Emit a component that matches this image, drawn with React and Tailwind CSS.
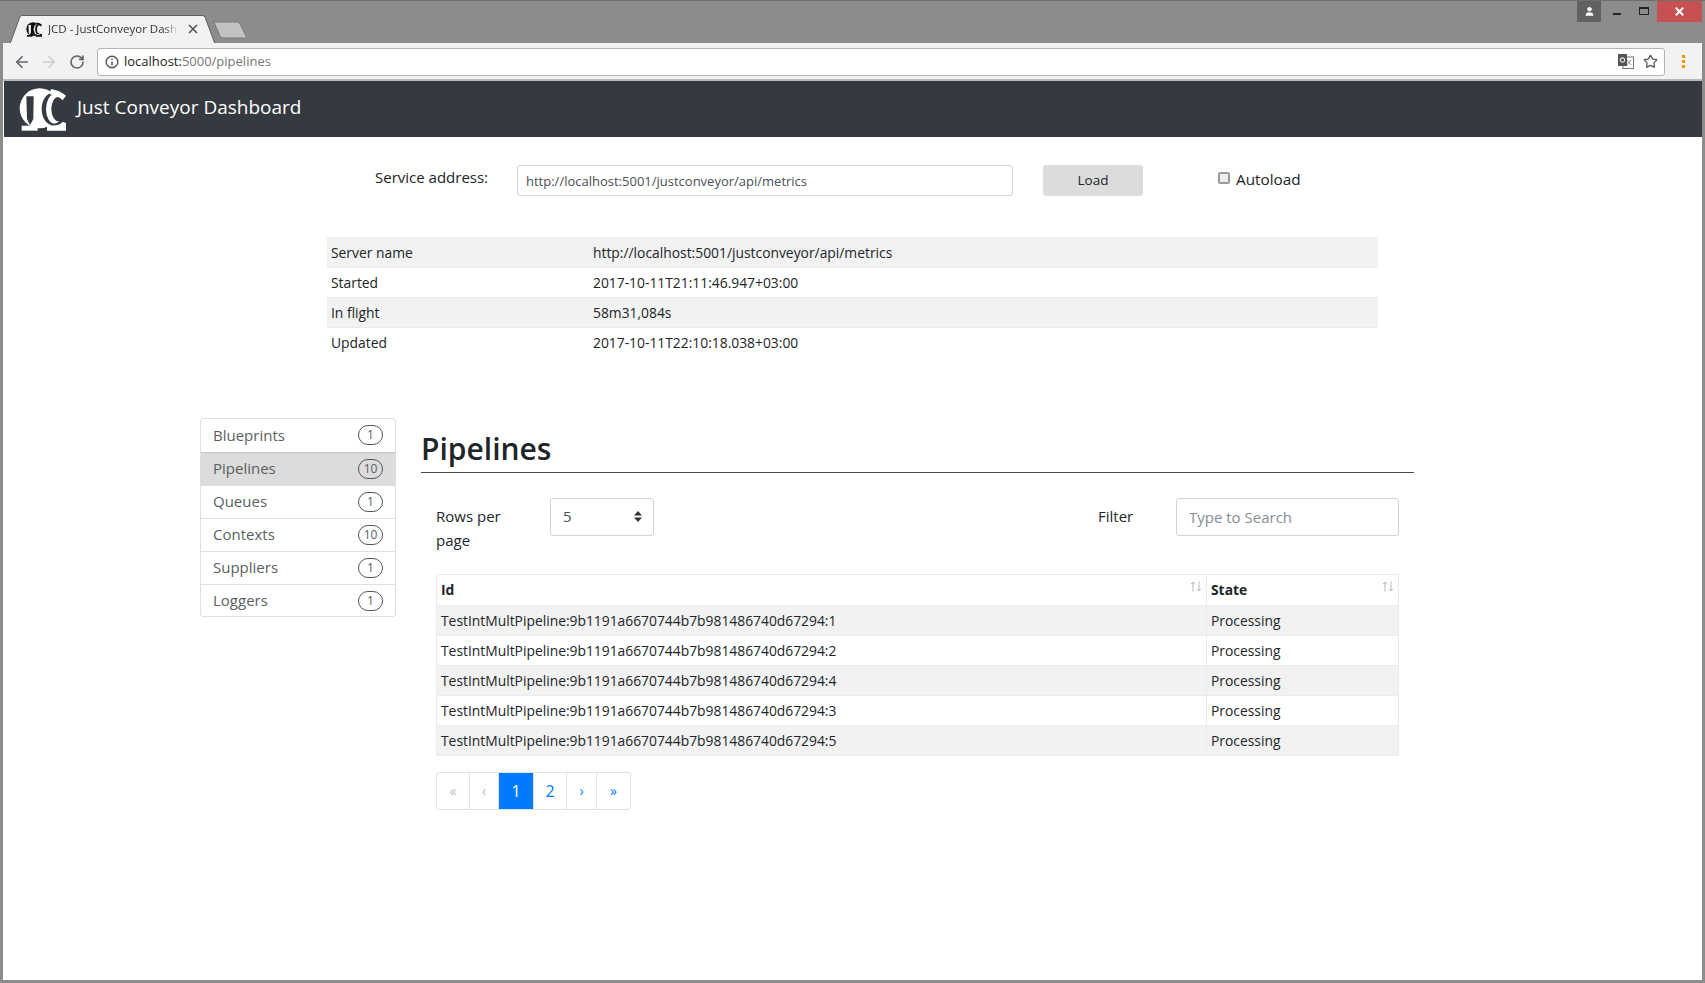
import React from "react";
import { ArrowLeft, ArrowRight, RotateCw, Star, User } from "lucide-react";

function Logo({ size, h, fg, bg }) {
  return (
    <svg width={size} height={h} viewBox="0 0 141 127" className="shrink-0">
      <circle cx="62" cy="60" r="60" fill={fg} />
      <path d="M22 24 H44 L43 92 L33 110 L24 92 Z" fill={bg} />
      <ellipse cx="100" cy="62" rx="32" ry="48" fill={bg} />
      <ellipse cx="106" cy="62" rx="25" ry="44" fill={fg} />
      <ellipse cx="119" cy="62" rx="22" ry="37" fill={bg} />
      <path d="M96 2 Q122 6 141 22 L131 36 Q116 22 92 18 Z" fill={fg} />
      <path d="M84 108 Q112 118 132 100 L141 104 V127 H84 Z" fill={fg} />
      <path d="M8 112 H56 V127 H8 Z" fill={fg} />
    </svg>
  );
}

function SortIcon() {
  return (
    <svg width="12" height="11" viewBox="0 0 12 11" fill="none" stroke="#b4b7ba" strokeWidth="1" className="shrink-0">
      <path d="M3 10.5V1M1 3.2 3 1l2 2.2" />
      <path d="M9 .5V10M7 7.8 9 10l2-2.2" />
    </svg>
  );
}

const info = [
  ["Server name", "http://localhost:5001/justconveyor/api/metrics"],
  ["Started", "2017-10-11T21:11:46.947+03:00"],
  ["In flight", "58m31,084s"],
  ["Updated", "2017-10-11T22:10:18.038+03:00"],
];

const nav = [
  ["Blueprints", "1"],
  ["Pipelines", "10"],
  ["Queues", "1"],
  ["Contexts", "10"],
  ["Suppliers", "1"],
  ["Loggers", "1"],
];

const rows = ["1", "2", "4", "3", "5"];

const pages = [
  ["«", "w-[34px] text-[#b6babd] text-[14px]"],
  ["‹", "w-[30px] text-[#b6babd] text-[14px]"],
  ["1", "w-[36px] bg-[#007bff] text-white border-[#007bff] text-[16px]"],
  ["2", "w-[34px] text-[#007bff] text-[16px]"],
  ["›", "w-[31px] text-[#007bff] text-[14px]"],
  ["»", "w-[35px] text-[#007bff] text-[14px]"],
];

export default function App() {
  return (
    <div className="w-[1705px] h-[983px] overflow-hidden flex flex-col bg-[#8c8c8c] pl-[3px] pr-[3px] pb-[3px] border-t border-[#6f6f6f] text-[#212529] font-['Open_Sans',sans-serif] text-[15px]">
      {/* title bar */}
      <div className="h-[42px] flex shrink-0 -mr-[3px]">
        <div className="ml-[7px] mt-[14px] relative w-[205px] h-[28px] flex items-center pl-[19px]">
          <svg width="205" height="29" viewBox="0 0 205 29" className="absolute left-0 top-0">
            <path d="M0 29 L10 1.5 Q11 .5 13 .5 H192 Q194 .5 195 2 L205 29 Z" fill="#f2f2f2" stroke="#5f5f5f" strokeWidth="1" />
          </svg>
          <span className="relative mr-[6px] -ml-[3px]"><Logo size={16} h={15} fg="#111111" bg="#f2f2f2" /></span>
          <span className="relative w-[131px] whitespace-nowrap text-[11.5px] leading-[16px] text-[#333] [mask-image:linear-gradient(to_right,black_88%,transparent)]">JCD - JustConveyor Dash</span>
          <svg width="10" height="10" viewBox="0 0 10 10" className="relative ml-[9px]" stroke="#555" strokeWidth="1.6"><path d="M1 1l8 8M9 1l-8 8" /></svg>
        </div>
        <svg width="36" height="18" viewBox="0 0 36 18" className="mt-[20px] -ml-[2px]">
          <path d="M1 1 H24 Q26 1 27 3 L34 17 H10 Q8 17 7 15 Z" fill="#c2c2c2" stroke="#7a7a7a" />
        </svg>
        <div className="ml-auto flex items-start h-[21px]">
          <div className="w-[24px] h-[21px] bg-[#616161] flex items-center justify-center">
            <User size={11} fill="white" color="white" />
          </div>
          <div className="w-[56px] h-[21px] flex items-start justify-center gap-[18px] pl-[4px]">
            <div className="w-[8px] h-[2px] bg-[#222] mt-[12px]" />
            <div className="w-[10px] h-[8px] border border-t-2 border-[#222] mt-[6px]" />
          </div>
          <div className="w-[45px] h-[21px] bg-[#c75050] flex items-center justify-center">
            <svg width="9" height="9" viewBox="0 0 9 9" stroke="white" strokeWidth="2"><path d="M.8.8l7.4 7.4M8.2.8.8 8.2" /></svg>
          </div>
          <div className="w-[3px]" />
        </div>
      </div>
      {/* toolbar */}
      <div className="h-[38px] shrink-0 bg-[#f2f2f2] flex items-center border-b-2 border-[#b9b9b9] pt-[1px] relative">
        <div className="w-[94px] flex items-center pl-[10px] gap-[9px]">
          <ArrowLeft size={18} color="#5f6368" strokeWidth={2.2} />
          <ArrowRight size={18} color="#cfcfcf" strokeWidth={2.2} />
          <RotateCw size={16} color="#5f6368" strokeWidth={2.4} className="ml-[2px]" />
        </div>
        <div className="w-[1568px] h-[28px] bg-white border border-[#b3b3b3] rounded-[3px] flex items-center pl-[7px] pr-[6px] text-[13px]">
          <svg width="14" height="14" viewBox="0 0 14 14" fill="none" stroke="#555" strokeWidth="1.4" className="shrink-0"><circle cx="7" cy="7" r="5.8" /><path d="M7 6.2V10.4M7 3.6V5" /></svg>
          <span className="ml-[5px] text-[#222]">localhost:</span><span className="text-[#767676]">5000/pipelines</span>
          <svg width="16" height="15" viewBox="0 0 16 15" className="ml-auto mr-[9px]">
            <rect x="5" y="3" width="10.5" height="11.5" fill="white" stroke="#777" />
            <rect x="0" y="0" width="9" height="12" fill="#555" />
            <circle cx="4.5" cy="6" r="2.2" fill="none" stroke="#ddd" strokeWidth="1.2" />
            <path d="M9 6l4 5M13 6l-4 5" stroke="#888" strokeWidth=".9" />
          </svg>
          <Star size={15} color="#555" strokeWidth={2} />
        </div>
        <div className="ml-[17px] flex flex-col gap-[2px]">
          <div className="w-[3px] h-[3px] bg-[#f29900]" />
          <div className="w-[3px] h-[3px] bg-[#f29900]" />
          <div className="w-[3px] h-[3px] bg-[#f29900]" />
        </div>
      </div>
      {/* page */}
      <div className="flex-1 bg-white flex flex-col">
        <div className="h-[56px] shrink-0 bg-[#343a40] ml-px flex items-center pl-[15px] text-white">
          <Logo size={47} h={43} fg="#ffffff" bg="#343a40" />
          <span className="ml-[11px] text-[19px] leading-[28px] -mt-[5px]">Just Conveyor Dashboard</span>
        </div>

        <div className="mt-[28px] ml-[372px] h-[31px] flex items-start">
          <label className="w-[142px] text-[15px] leading-[24px]">Service address:</label>
          <input readOnly value="http://localhost:5001/justconveyor/api/metrics" className="w-[496px] h-[31px] border border-[#ced4da] rounded-[3px] px-[8px] text-[13px] text-[#495057] outline-none font-['Open_Sans',sans-serif]" />
          <button className="ml-[30px] w-[100px] h-[31px] bg-[#dcdcdc] rounded-[3px] text-[13.5px]">Load</button>
          <input type="checkbox" readOnly className="appearance-none ml-[75px] mt-[7px] w-[12px] h-[12px] border-2 border-[#9b9b9b] rounded-[2px] bg-[#eeeeee]" />
          <span className="ml-[6px] text-[15.3px] leading-[28px]">Autoload</span>
        </div>

        <table className="mt-[41px] ml-[324px] w-[1051px] table-fixed border-collapse text-[13.85px] shrink-0">
          <tbody>
            {info.map(([k, v], i) => (
              <tr key={k} className={`h-[30px] border-t border-[#e9ecef] ${i % 2 === 0 ? "bg-[#f2f2f2]" : ""}`}>
                <td className="w-[265px] pl-[4px] pt-[1px] pb-0">{k}</td>
                <td className="pt-[1px] pb-0 pl-[1px]">{v}</td>
              </tr>
            ))}
          </tbody>
        </table>

        <div className="mt-[60px] ml-[197px] flex items-start">
          <div className="w-[196px] h-[199px] shrink-0 border border-[#dfdfdf] rounded-[3px] flex flex-col overflow-hidden text-[#5a5f63]">
            {nav.map(([n, c], i) => (
              <div key={n} className={`h-[33px] shrink-0 flex items-center pl-[12px] pr-[12px] justify-between ${i > 0 ? "border-t border-[#dfdfdf]" : ""} ${n === "Pipelines" ? "bg-[#dcdcdc] border-t-[#c4c4c4]" : ""}`}>
                <span>{n}</span>
                <span className="w-[25px] h-[20px] rounded-full border border-[#555] flex items-center justify-center text-[12px] leading-none">{c}</span>
              </div>
            ))}
          </div>

          <div className="ml-[25px] w-[993px]">
            <h1 className="h-[55px] border-b border-[#4a4a4a] text-[30px] font-semibold leading-[61px]">Pipelines</h1>
            <div className="mt-[25px] ml-[15px] w-[963px] h-[76px] flex items-start">
              <div className="w-[114px] leading-[24px] pt-[6px] text-[15px]">Rows per<br />page</div>
              <div className="relative w-[104px] h-[38px]">
                <select className="appearance-none w-full h-full border border-[#ced4da] rounded-[3px] pl-[12px] bg-white text-[15px] text-[#495057] font-['Open_Sans',sans-serif]">
                  <option>5</option>
                </select>
                <svg width="8" height="11" viewBox="0 0 8 11" className="absolute right-[12px] top-[13px]" fill="#333"><path d="M4 0l4 4.4H0zM4 11 0 6.6h8z" /></svg>
              </div>
              <div className="ml-[444px] w-[78px] leading-[36px] text-[15px]">Filter</div>
              <input placeholder="Type to Search" className="w-[223px] h-[38px] border border-[#ced4da] rounded-[3px] px-[12px] text-[15px] outline-none placeholder:text-[#868e96] font-['Open_Sans',sans-serif]" />
            </div>
            <table className="ml-[15px] w-[963px] table-fixed border-collapse text-[13.85px]">
              <thead>
                <tr className="h-[31px]">
                  <th className="w-[770px] border border-[#e9ecef] px-[4px] pt-[1px] pb-0 text-left font-bold">
                    <div className="flex justify-between"><span>Id</span><span className="mt-[1px]"><SortIcon /></span></div>
                  </th>
                  <th className="border border-[#e9ecef] px-[4px] pt-[1px] pb-0 text-left font-bold">
                    <div className="flex justify-between"><span>State</span><span className="mt-[1px]"><SortIcon /></span></div>
                  </th>
                </tr>
              </thead>
              <tbody>
                {rows.map((r, i) => (
                  <tr key={r} className={`h-[30px] ${i % 2 === 0 ? "bg-[#f2f2f2]" : ""}`}>
                    <td className="border border-[#e9ecef] px-[4px] pt-[2px] pb-0 whitespace-nowrap">{`TestIntMultPipeline:9b1191a6670744b7b981486740d67294:${r}`}</td>
                    <td className="border border-[#e9ecef] px-[4px] pt-[2px] pb-0">Processing</td>
                  </tr>
                ))}
              </tbody>
            </table>
            <div className="mt-[16px] ml-[15px] flex h-[38px]">
              {pages.map(([t, c], i) => (
                <div key={i} className={`h-[38px] flex items-center justify-center border border-[#dee2e6] ${i > 0 ? "-ml-px" : "rounded-l-[3px]"} ${i === 5 ? "rounded-r-[3px]" : ""} ${c}`}>{t}</div>
              ))}
            </div>
          </div>
        </div>
      </div>
    </div>
  );
}
